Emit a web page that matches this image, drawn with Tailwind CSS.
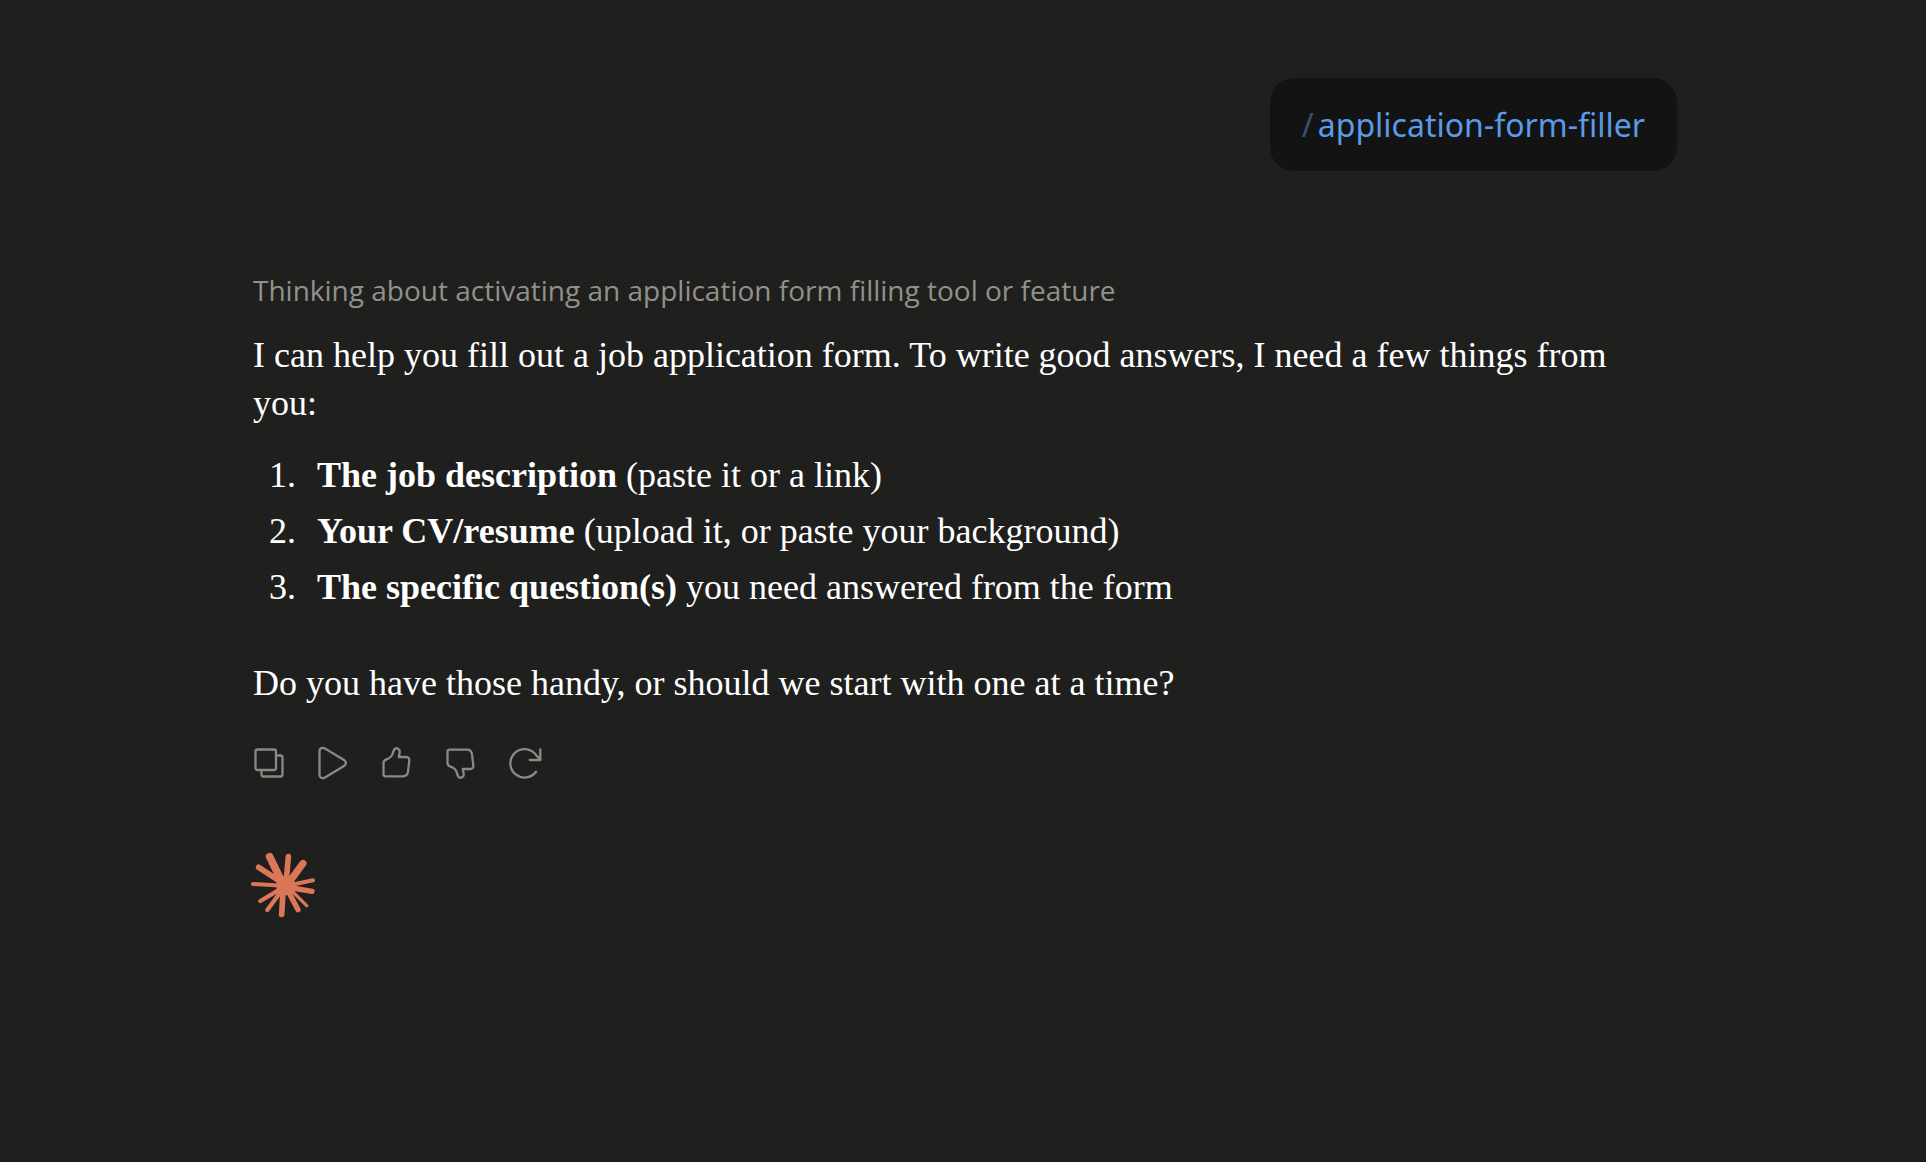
<!DOCTYPE html>
<html lang="en">
<head>
<meta charset="utf-8">
<meta name="viewport" content="width=device-width, initial-scale=1">
<title>Application form filler</title>
<script src="https://cdn.jsdelivr.net/npm/@tailwindcss/browser@4"></script>
</head>
<body class="min-h-screen border-b border-[#1c1417] bg-[#1f1f1e] text-white">
<main class="mx-auto box-content max-w-[1424px] pt-[78px] pl-1">
  <div class="flex justify-end">
    <div class="flex h-[93px] items-center gap-1 rounded-3xl bg-[#131313] px-8 font-['Noto_Sans',sans-serif] text-[32px] leading-[48px] text-[#5a9ae6]"><span class="text-[#3a516f]">/</span><a href="#">application-form-filler</a></div>
  </div>
  <p class="pt-[99px] font-['Open_Sans',sans-serif] text-[28px] leading-10 text-[#91918b]">Thinking about activating an application form filling tool or feature</p>
  <article class="mt-[21px] pr-16 font-['Liberation_Serif',serif] text-[36px] leading-[48px]">
    <p>I can help you fill out a job application form. To write good answers, I need a few things from you:</p>
    <ol class="mt-6 flex flex-col gap-2">
      <li class="flex"><span class="w-16 pl-4">1.</span><p><strong>The job description</strong> (paste it or a link)</p></li>
      <li class="flex"><span class="w-16 pl-4">2.</span><p><strong>Your CV/resume</strong> (upload it, or paste your background)</p></li>
      <li class="flex"><span class="w-16 pl-4">3.</span><p><strong>The specific question(s)</strong> you need answered from the form</p></li>
    </ol>
    <p class="mt-12">Do you have those handy, or should we start with one at a time?</p>
  </article>
  <div class="mt-6 -ml-[17px] flex text-[#8b8986]">
    <button type="button" aria-label="Copy" class="size-16"><svg viewBox="0 0 64 64" fill="none" stroke="currentColor" stroke-width="2.300" stroke-linecap="round" stroke-linejoin="round"><rect x="19.5" y="18.500" width="20.500" height="20.500" rx="2"/><path d="M41 24.500h3.500a2 2 0 0 1 2 2v17a2 2 0 0 1-2 2h-17a2 2 0 0 1-2-2V40"/></svg></button>
    <button type="button" aria-label="Read aloud" class="size-16"><svg viewBox="0 0 64 64" fill="none" stroke="currentColor" stroke-width="2.300" stroke-linejoin="round"><path d="M19.500 20v24c0 3 3 4 5.500 2.500l19-11.500c2.500-1.500 2.500-4.500 0-6L25 17.500c-2.500-1.500-5.500-.5-5.500 2.500z"/></svg></button>
    <button type="button" aria-label="Good response" class="size-16"><svg viewBox="0 0 64 64" fill="none" stroke="currentColor" stroke-width="2.300" stroke-linejoin="round"><path d="M21.500 45.300a2 2 0 0 1-2-2V32c0-2 1-3 3-3.700 3.500-1.200 5-2.300 6-5.300l1.500-4c.7-1.700 2.500-2.200 4-1.300 1.500.8 2 2.300 1.600 4L34.800 26H42c2.200 0 3.600 1.500 3.300 3.700l-1.300 11c-.4 3-2 4.600-5 4.600z"/></svg></button>
    <button type="button" aria-label="Bad response" class="size-16"><svg viewBox="0 0 64 64" fill="none" stroke="currentColor" stroke-width="2.300" stroke-linejoin="round"><path d="M21.500 18.700a2 2 0 0 0-2 2V32c0 2 1 3 3 3.700 3.500 1.200 5 2.300 6 5.300l1.500 4c.7 1.700 2.500 2.200 4 1.300 1.500-.8 2-2.300 1.600-4L34.800 38H42c2.200 0 3.600-1.500 3.300-3.700l-1.300-11c-.4-3-2-4.600-5-4.600z"/></svg></button>
    <button type="button" aria-label="Retry" class="size-16"><svg viewBox="0 0 64 64" fill="none" stroke="currentColor" stroke-width="2.300" stroke-linecap="round" stroke-linejoin="round"><path d="M44 40.700A14.200 14.200 0 1 1 42.300 22L48.300 28.700M48.300 18.500V29H37.700"/></svg></button>
  </div>
  <svg class="mt-[57px] -ml-px h-[66px] w-16" viewBox="36 36 192 198" overflow="visible" role="img" aria-label="Claude" fill="none" stroke="#d97757" stroke-linecap="round"><circle cx="137" cy="137" r="29" fill="#d97757" stroke="none"/><path stroke-width="23" d="M89 50 125 125"/><path stroke-width="17" d="M145 50 138 130M56 82 125 127M125 223 130 140"/><path stroke-width="21" d="M189 70 145 130"/><path stroke-width="12" d="M219 121 140 137M39 132 130 137"/><path stroke-width="16" d="M216 154 140 141M174 209 140 145"/><path stroke-width="10" d="M200 197 145 142"/><path stroke-width="13" d="M82 210 132 142M61 183 130 142"/></svg>
</main>
</body>
</html>
